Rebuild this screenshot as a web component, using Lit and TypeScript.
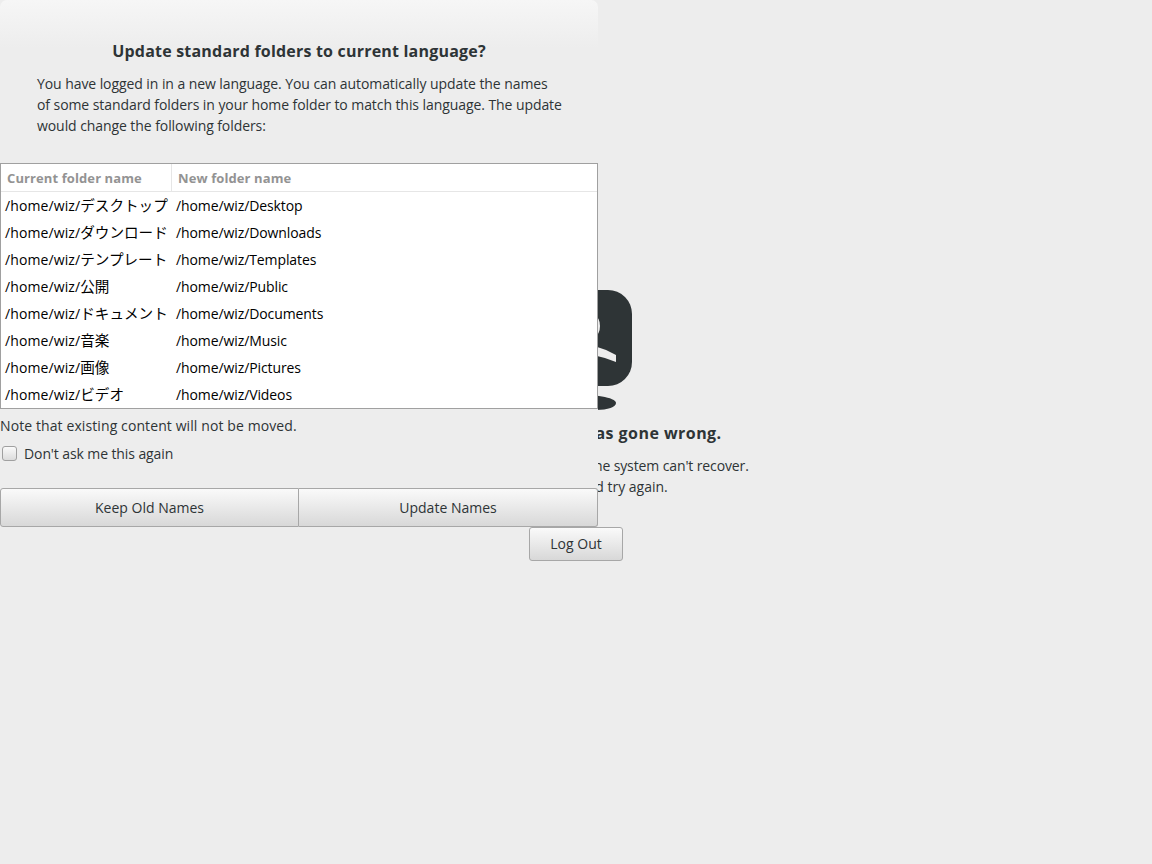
import { LitElement, html, css, svg } from "lit";
import { customElement } from "lit/decorators.js";

const ROWS: [string, string][] = [
  ["デスクトップ", "/home/wiz/Desktop"],
  ["ダウンロード", "/home/wiz/Downloads"],
  ["テンプレート", "/home/wiz/Templates"],
  ["公開", "/home/wiz/Public"],
  ["ドキュメント", "/home/wiz/Documents"],
  ["音楽", "/home/wiz/Music"],
  ["画像", "/home/wiz/Pictures"],
  ["ビデオ", "/home/wiz/Videos"],
];

const whale = svg`<svg width="112" height="120" viewBox="0 0 112 120">
  <path fill="#2e3436" d="M24 0H88A24 24 0 0 1 112 24V72A24 24 0 0 1 88 96H24A24 24 0 0 1 0 72V24A24 24 0 0 1 24 0Z"/>
  <ellipse cx="75" cy="36" rx="5" ry="10" fill="#ededed"/>
  <ellipse cx="37" cy="36" rx="5" ry="10" fill="#ededed"/>
  <path fill="#ededed" d="M16 72V65Q56 42 96 65V72Q56 55 16 72Z"/>
  <path fill="#2e3436" d="M56 104.5C72 104.5 96 107 96 113C96 117 88 120 76 120H36C24 120 16 117 16 113C16 107 40 104.5 56 104.5Z"/>
</svg>`;

@customElement("app-root")
export class AppRoot extends LitElement {
  static styles = css`
    :host {
      display: block;
      position: relative;
      width: 1152px;
      height: 864px;
      overflow: hidden;
      background: #ededed;
      color: #2e3436;
      font-family: "Open Sans", "Noto Sans CJK JP", sans-serif;
      font-size: 14px;
    }
    .fail {
      display: flex;
      flex-direction: column;
      align-items: center;
      padding-top: 290px;
    }
    .fail h1 {
      margin: 13px 0 0;
      font-size: 16px;
      line-height: 20px;
      font-weight: 700;
      letter-spacing: 0.45px;
    }
    .fail p {
      margin: 12px 0 0;
      text-align: center;
      line-height: 21px;
    }
    .fail p::first-line {
      letter-spacing: -0.115px;
    }
    .logout {
      margin-top: 30px;
      width: 94px;
      height: 34px;
      box-sizing: border-box;
      padding-bottom: 1px;
      border: 1px solid #a7a7a7;
      border-radius: 3px;
      background: linear-gradient(#fafafa, #d8d8d8);
      display: flex;
      align-items: center;
      justify-content: center;
    }
    .dialog {
      position: absolute;
      left: 0;
      top: 0;
      width: 598px;
      height: 527px;
      display: flex;
      flex-direction: column;
      border-radius: 7px 7px 0 0;
      background: linear-gradient(#f6f6f6 0, #ededed 48px);
    }
    .dialog h2 {
      margin: 40px 0 0;
      text-align: center;
      font-size: 16px;
      line-height: 22px;
      font-weight: 700;
      letter-spacing: 0.2px;
    }
    .intro {
      margin: 11px 0 0 37px;
      line-height: 21px;
      white-space: nowrap;
      letter-spacing: -0.075px;
    }
    .table {
      margin-top: 27px;
      height: 246px;
      box-sizing: border-box;
      border: 1px solid #a0a0a0;
      background: #fff;
      color: #000;
      display: grid;
      grid-template-columns: 171px 1fr;
      grid-auto-rows: 27px;
      overflow: hidden;
    }
    .th {
      height: 28px;
      box-sizing: border-box;
      border-bottom: 1px solid #e6e6e6;
      padding: 1px 6px 0;
      color: #939393;
      font-size: 13px;
      font-weight: 700;
      letter-spacing: 0.1px;
      display: flex;
      align-items: center;
    }
    .th.first {
      border-right: 1px solid #e6e6e6;
    }
    .td {
      display: flex;
      align-items: center;
      padding: 2px 0 0 4px;
      white-space: nowrap;
      overflow: hidden;
      letter-spacing: -0.1px;
    }
    .td.first {
      padding-top: 2px;
      align-items: baseline;
      line-height: 25px;
      letter-spacing: 0.1px;
    }
    .cjk {
      font-size: 14.6px;
      letter-spacing: 0;
    }
    .note {
      margin: 6px 0 0;
      line-height: 21px;
      letter-spacing: 0.1px;
    }
    .check {
      margin-top: 7px;
      display: flex;
      align-items: center;
      gap: 7px;
      height: 21px;
      padding-left: 2px;
      letter-spacing: -0.1px;
    }
    .box {
      width: 15px;
      height: 15px;
      box-sizing: border-box;
      border: 1px solid #a0a0a0;
      border-radius: 3px;
      background: linear-gradient(#fafafa, #dcdcdc);
    }
    .actions {
      margin-top: 24px;
      height: 39px;
      box-sizing: border-box;
      display: grid;
      grid-template-columns: 299px 1fr;
    }
    .btn {
      display: flex;
      align-items: center;
      justify-content: center;
      border: 1px solid #a7a7a7;
      background: linear-gradient(#fafafa, #d8d8d8);
    }
    .btn.left { border-radius: 3px 0 0 3px; }
    .btn.right { border-left: 0; border-radius: 0 3px 3px 0; }
  `;

  render() {
    return html`
      <div class="fail">
        ${whale}
        <h1>Oh no! Something has gone wrong.</h1>
        <p>A problem has occurred and the system can't recover.<br />Please log out and try again.</p>
        <div class="logout">Log Out</div>
      </div>
      <div class="dialog">
        <h2>Update standard folders to current language?</h2>
        <div class="intro">
          You have logged in in a new language. You can automatically update the names<br />
          of some standard folders in your home folder to match this language. The update<br />
          would change the following folders:
        </div>
        <div class="table">
          <div class="th first">Current folder name</div>
          <div class="th">New folder name</div>
          ${ROWS.map(
            ([a, b]) =>
              html`<div class="td first"><span>/home/wiz/<span class="cjk">${a}</span></span></div><div class="td">${b}</div>`
          )}
        </div>
        <div class="note">Note that existing content will not be moved.</div>
        <div class="check"><span class="box"></span><span>Don't ask me this again</span></div>
        <div class="actions">
          <div class="btn left">Keep Old Names</div>
          <div class="btn right">Update Names</div>
        </div>
      </div>
    `;
  }
}
